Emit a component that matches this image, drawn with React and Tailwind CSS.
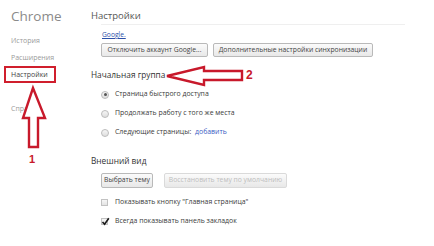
import React from 'react';

const font = { fontFamily: '"Open Sans", "Noto Sans", sans-serif' };

function Btn({ children, disabled, w }) {
  return (
    <div
      className={`${w} h-full flex items-center justify-center whitespace-nowrap border rounded-[2px] text-[6.8px] bg-gradient-to-b from-[#fbfbfb] to-[#e8e8e8] ${
        disabled ? 'border-[#dadada] text-[#bdbdbd]' : 'border-[#b9b9b9] text-[#444]'
      }`}
    >
      {children}
    </div>
  );
}

function Radio({ checked, children }) {
  return (
    <div className="flex items-center h-[19px] pl-[10px]">
      <span className="w-[8px] h-[8px] rounded-full border border-[#bcbcbc] bg-gradient-to-b from-[#f6f6f6] to-[#dedede] flex items-center justify-center">
        {checked && <span className="w-[3px] h-[3px] rounded-full bg-[#555]"></span>}
      </span>
      <span className="ml-[6px] text-[6.9px] text-[#3a3a3a] whitespace-nowrap">{children}</span>
    </div>
  );
}

function Check({ checked, children }) {
  return (
    <div className="flex items-center h-[19px] pl-[10px]">
      <span className="relative w-[7px] h-[7px] border border-[#c2c2c2] bg-gradient-to-b from-[#f6f6f6] to-[#e4e4e4]">
        {checked && (
          <svg className="absolute -left-[1px] -top-[2px]" width="9" height="9" viewBox="0 0 9 9">
            <path d="M1.5 5 L3.6 7.3 L7.8 1.2" fill="none" stroke="#1a1a1a" strokeWidth="1.6" />
          </svg>
        )}
      </span>
      <span className="ml-[7px] text-[6.9px] text-[#3a3a3a] whitespace-nowrap">{children}</span>
    </div>
  );
}

export default function App() {
  return (
    <div className="relative w-[434px] h-[246px] bg-white overflow-hidden flex" style={font}>
      {/* Sidebar */}
      <div className="w-[91px] shrink-0 pt-[8px] pl-[11px]">
        <div className="text-[13.5px] text-[#8a8a8a] leading-[16px]">Chrome</div>
        <div className="mt-[8px] flex flex-col text-[7px] text-[#9a9a9a]">
          <div className="h-[17px] leading-[17px]">История</div>
          <div className="h-[17px] leading-[17px]">Расширения</div>
          <div className="h-[17px] leading-[13px] -ml-[7px] pl-[5px] w-[52px] border-2 border-[#d01f2d] text-[#444]">Настройки</div>
          <div className="mt-[17px] h-[17px] leading-[17px]">Справка</div>
        </div>
      </div>

      {/* Main */}
      <div className="flex-1 pt-[8px] flex flex-col">
        <div className="text-[9.5px] text-[#555] leading-[16px]">Настройки</div>
        <div className="ml-[10px] w-[304px] h-px bg-[#efefef]"></div>
        <div className="pl-[11px] mt-[5px] text-[6.7px] text-[#2a4fa8] underline leading-[10px]">Google.</div>
        <div className="pl-[10px] mt-[3px] h-[14px] flex gap-[5px]">
          <Btn w="w-[107px]">Отключить аккаунт Google...</Btn>
          <Btn w="w-[160px]">Дополнительные настройки синхронизации</Btn>
        </div>
        <div className="mt-[12px] text-[8.3px] text-[#333] leading-[12px]">Начальная группа</div>
        <div className="mt-[4px]">
          <Radio checked>Страница быстрого доступа</Radio>
          <Radio>Продолжать работу с того же места</Radio>
          <Radio>
            Следующие страницы: <span className="ml-[2px] text-[#3b5cc4]">добавить</span>
          </Radio>
        </div>
        <div className="mt-[13px] text-[8.3px] text-[#333] leading-[12px]">Внешний вид</div>
        <div className="pl-[10px] mt-[6px] h-[15px] flex gap-[11px]">
          <Btn w="w-[52px]">Выбрать тему</Btn>
          <Btn w="w-[123px]" disabled>Восстановить тему по умолчанию</Btn>
        </div>
        <div className="mt-[5px]">
          <Check>Показывать кнопку "Главная страница"</Check>
          <Check checked>Всегда показывать панель закладок</Check>
        </div>
      </div>

      {/* Annotation arrows */}
      <svg className="absolute left-0 top-0 pointer-events-none" width="434" height="246" viewBox="0 0 434 246">
        <polygon points="33,88 23,118 29,118 29,147 38,147 38,118 45,118" fill="white" stroke="#c8192b" strokeWidth="2.4" />
        <polygon points="167,76 204,67 204,71 242,71 242,80 204,80 204,85" fill="white" stroke="#c8192b" strokeWidth="2.4" />
      </svg>
      <div className="absolute left-[29px] top-[152px] text-[11px] leading-[14px] font-bold text-[#c8192b]" style={{ fontFamily: '"Liberation Sans", sans-serif' }}>1</div>
      <div className="absolute left-[246px] top-[67px] text-[12px] leading-[16px] font-bold text-[#c8192b]" style={{ fontFamily: '"Liberation Sans", sans-serif' }}>2</div>
    </div>
  );
}
